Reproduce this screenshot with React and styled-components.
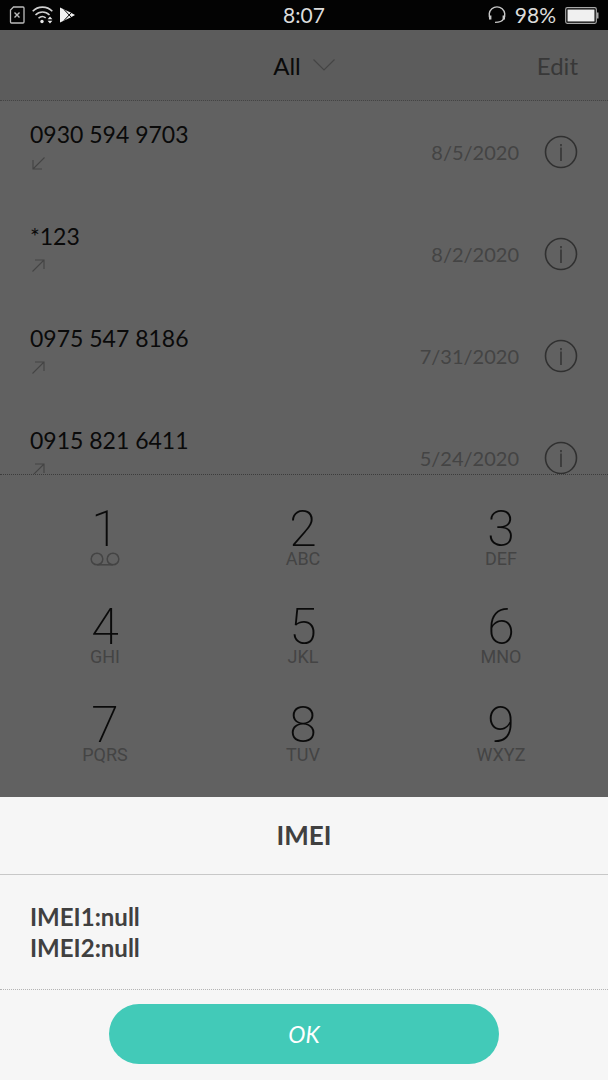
import React from 'react';
import styled, { createGlobalStyle } from 'styled-components';

const GlobalStyle = createGlobalStyle`
  * {
    box-sizing: border-box;
  }

  body {
    margin: 0;
    background: #616161;
    font-family: Lato, "Open Sans", sans-serif;
  }

  button {
    padding: 0;
    border: 0;
    background: none;
    color: inherit;
    font: inherit;
    cursor: pointer;
  }

  svg {
    display: block;
    fill: none;
  }
`;

const Screen = styled.div`
  display: flex;
  flex-direction: column;
  height: 100vh;
  background: #616161;
  color: #0a0a0a;
`;

const StatusBar = styled.div`
  display: grid;
  grid-template-columns: 1fr auto 1fr;
  align-items: center;
  flex: none;
  height: 30px;
  padding: 0 9px;
  background: #030303;
  color: #dcdcdc;
  font-size: 21px;
  line-height: 30px;
`;

const StatusGroup = styled.div`
  display: flex;
  align-items: center;
  justify-content: ${props => (props.$end ? 'flex-end' : 'flex-start')};
  gap: ${props => (props.$end ? '9px' : '7px')};
`;

const Header = styled.header`
  display: grid;
  grid-template-columns: 1fr auto 1fr;
  align-items: center;
  flex: none;
  height: 71px;
  padding: 0 30px;
  border-bottom: 1px dotted #444;
  background: #5c5c5c;
  font-size: 24px;
`;

const FilterBtn = styled.button`
  display: flex;
  align-items: center;
  grid-column: 2;
  gap: 12px;
`;

const EditBtn = styled.button`
  justify-self: end;
  color: #383838;
`;

const CallList = styled.ul`
  flex: 1 1 0;
  min-height: 0;
  margin: 0;
  padding: 0;
  overflow: hidden;
  list-style: none;
`;

const CallRow = styled.li`
  display: flex;
  align-items: center;
  height: 102px;
  padding: 0 30px;
`;

const Caller = styled.div`
  flex: 1;
  align-self: flex-start;
  padding-top: 17px;
  font-size: 23px;
  line-height: 32px;

  svg {
    margin: 7px 0 0 2px;
  }
`;

const CallDate = styled.span`
  margin-right: 25px;
  color: #444;
  font-size: 20px;
`;

const Keypad = styled.div`
  display: grid;
  grid-template-columns: repeat(3, 1fr);
  grid-auto-rows: 98px;
  flex: none;
  height: 323px;
  padding: 30px 8px 0 6px;
  border-top: 1px dotted #3c3c3c;
`;

const Key = styled.button`
  display: flex;
  flex-direction: column;
  align-items: center;
  font-family: Roboto, sans-serif;
`;

const Digit = styled.span`
  font-size: 50px;
  font-weight: 200;
  line-height: 48px;
`;

const Letters = styled.span`
  display: flex;
  align-items: center;
  height: 12px;
  color: #444;
  font-size: 18px;
  line-height: 12px;
`;

const Sheet = styled.section`
  flex: none;
  background: #f6f6f6;
  color: #404040;
  font-size: 24px;
  font-weight: 700;
`;

const SheetTitle = styled.h2`
  margin: 0;
  border-bottom: 1px solid #c8c8c8;
  font-size: 26px;
  line-height: 77px;
  text-align: center;
`;

const SheetBody = styled.div`
  padding: 26px 30px;
  border-bottom: 1px dotted #b4b4b4;
  line-height: 31px;
`;

const SheetFooter = styled.div`
  padding: 14px 18% 16px;
`;

const OkBtn = styled.button`
  width: 100%;
  height: 60px;
  border-radius: 30px;
  background: #42cab8;
  color: #fff;
  font-size: 23px;
  font-style: italic;
  font-weight: 400;
`;

const calls = [
  { number: '0930 594 9703', date: '8/5/2020', incoming: true },
  { number: '*123', date: '8/2/2020' },
  { number: '0975 547 8186', date: '7/31/2020' },
  { number: '0915 821 6411', date: '5/24/2020' },
];

const keys = [
  ['1', ''],
  ['2', 'ABC'],
  ['3', 'DEF'],
  ['4', 'GHI'],
  ['5', 'JKL'],
  ['6', 'MNO'],
  ['7', 'PQRS'],
  ['8', 'TUV'],
  ['9', 'WXYZ'],
];

const NoSimIcon = () => (
  <svg width="16" height="18" viewBox="0 0 16 18" stroke="#bdbdbd">
    <path d="M4.5 1H14a1 1 0 0 1 1 1v14a1 1 0 0 1-1 1H2.500a1 1 0 0 1-1-1V4z" strokeWidth="1.3" />
    <path d="M5.500 6.500l5 5M10.500 6.500l-5 5" strokeWidth="1.4" />
  </svg>
);

const WifiIcon = () => (
  <svg width="21" height="18" viewBox="0 0 21 18" stroke="#d0d0d0" strokeWidth="1.6">
    <path d="M.7 5.200C6-.2 15-.2 20.300 5.200M3.500 9c4-4 10-4 14 0M6.500 12.300c2.200-2.200 5-2.200 7.200-.4" />
    <circle cx="10" cy="15.500" r="1.700" fill="#e8e8e8" stroke="none" />
    <path d="M18 10.500l2.400 2.800h-4.800zM18 17.500l2.400-2.800h-4.800z" fill="#e8e8e8" stroke="none" />
  </svg>
);

const PlayIcon = () => (
  <svg width="15" height="16" viewBox="0 0 15 16">
    <path d="M0 .5L10 5.200 15 8l-5 2.800L0 15.500z" fill="#f2f2f2" />
    <path d="M4 2.500l7.500 8M4 13.500l7.500-8" stroke="#030303" strokeWidth="1" />
  </svg>
);

const HeadsetIcon = () => (
  <svg width="18" height="18" viewBox="0 0 18 18" stroke="#c8c8c8" strokeWidth="1.4">
    <path d="M2.500 13A7.800 7.800 0 1 1 15.500 13" />
    <path d="M2.200 9.500v4M15.800 9.500v4" strokeWidth="2.400" />
    <path d="M15.500 13c-1.200 2.400-3 3.400-8.500 3.400" />
  </svg>
);

const BatteryIcon = () => (
  <svg width="34" height="17" viewBox="0 0 34 17">
    <rect x=".7" y=".7" width="30.600" height="15.600" rx="1.500" stroke="#a8a8a8" strokeWidth="1.200" />
    <rect x="2.500" y="2.500" width="27" height="12" fill="#f0f0f0" />
    <path d="M32 5.500h1.500v6H32z" fill="#a8a8a8" />
  </svg>
);

const ChevronIcon = () => (
  <svg width="22" height="12" viewBox="0 0 22 12" stroke="#454545" strokeWidth="1.2">
    <path d="M.5.5L11 11 21.500.5" />
  </svg>
);

const DirectionIcon = ({ incoming }) => (
  <svg width="13" height="13" viewBox="0 0 13 13" stroke="#444" strokeWidth="1.1">
    <path d={incoming ? 'M12.500.5L1 12M1 3v9h9' : 'M.5 12.500L12 1M3 1h9v9'} />
  </svg>
);

const InfoIcon = () => (
  <svg width="34" height="34" viewBox="0 0 34 34" stroke="#303030">
    <circle cx="17" cy="17" r="15.500" strokeWidth="1.600" />
    <path d="M17 9v2.200M17 12.500v13.500" strokeWidth="1.400" />
  </svg>
);

const VoicemailIcon = () => (
  <svg width="30" height="14" viewBox="0 0 30 14" stroke="#444" strokeWidth="1.500">
    <circle cx="7" cy="7" r="5.800" />
    <circle cx="23" cy="7" r="5.800" />
    <path d="M7 12.800h16" />
  </svg>
);

export default class App extends React.Component {
  state = {
    showSheet: true
  }
  hideSheet = () => {
    this.setState({ showSheet: false });
  }
  render() {
    return (
      <React.Fragment>
        <GlobalStyle />
        <Screen>
          <StatusBar>
            <StatusGroup>
              <NoSimIcon />
              <WifiIcon />
              <PlayIcon />
            </StatusGroup>
            <span>8:07</span>
            <StatusGroup $end>
              <HeadsetIcon />
              <span>98%</span>
              <BatteryIcon />
            </StatusGroup>
          </StatusBar>
          <Header>
            <FilterBtn type="button">
              All
              <ChevronIcon />
            </FilterBtn>
            <EditBtn type="button">Edit</EditBtn>
          </Header>
          <CallList>
            {calls.map(call => (
              <CallRow key={call.number}>
                <Caller>
                  {call.number}
                  <DirectionIcon incoming={call.incoming} />
                </Caller>
                <CallDate>{call.date}</CallDate>
                <button type="button" aria-label="Call details">
                  <InfoIcon />
                </button>
              </CallRow>
            ))}
          </CallList>
          <Keypad>
            {keys.map(([digit, letters]) => (
              <Key type="button" key={digit}>
                <Digit>{digit}</Digit>
                <Letters>{letters || <VoicemailIcon />}</Letters>
              </Key>
            ))}
          </Keypad>
          {this.state.showSheet && (
            <Sheet role="dialog" aria-labelledby="sheet-title">
              <SheetTitle id="sheet-title">IMEI</SheetTitle>
              <SheetBody>
                <div>IMEI1:null</div>
                <div>IMEI2:null</div>
              </SheetBody>
              <SheetFooter>
                <OkBtn type="button" onClick={this.hideSheet}>OK</OkBtn>
              </SheetFooter>
            </Sheet>
          )}
        </Screen>
      </React.Fragment>
    );
  }
}
